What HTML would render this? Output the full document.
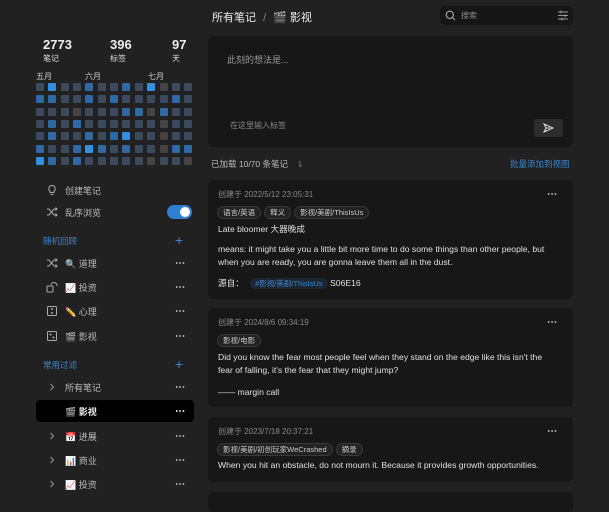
<!DOCTYPE html>
<html><head><meta charset="utf-8"><style>
*{margin:0;padding:0;box-sizing:border-box}
body{width:609px;height:500px;overflow:hidden;background:#212121;font-family:"Liberation Sans","Noto Sans CJK SC",sans-serif;color:#ddd;position:relative}
.a{position:absolute;white-space:nowrap}
.num{font-size:13px;font-weight:bold;color:#eee}
.lab{font-size:8px;color:#ddd}
.cell{position:absolute;width:8px;height:8px;border-radius:1px}
.it{position:absolute;left:36px;width:158px;height:22px;font-size:9px;color:#bbb}
.it .ic{position:absolute;left:10px;top:5px;width:12px;height:12px}
.it .tx{position:absolute;left:29px;top:5px}
.it .dots{position:absolute;right:9px;top:10px;width:10px;height:2px;background:radial-gradient(circle,#aaa 0.9px,transparent 1px) 0 0/3.4px 2px repeat-x}
.sec{position:absolute;left:43px;font-size:8.5px;color:#3a86d0}
.plus{position:absolute;left:175px;font-size:14px;color:#3a86d0;line-height:14px}
.card{position:absolute;left:208px;width:365px;background:#171717;border-radius:5px}
.date{position:absolute;left:10px;top:9px;font-size:8px;color:#888}
.cd{position:absolute;right:16px;top:13px;width:10px;height:2px;background:radial-gradient(circle,#aaa 0.9px,transparent 1px) 0 0/3.4px 2px repeat-x}
.tag{display:inline-block;font-size:7.5px;color:#ccc;border:1px solid #3a3a3a;background:#222;border-radius:7px;padding:0 5px;margin-right:3px;line-height:11px;height:13px}
.tags{position:absolute;left:9px;display:flex;height:13px}
.p{position:absolute;left:10px;font-size:8.6px;color:#e0e0e0;line-height:13px;white-space:nowrap}
.chev{position:absolute;left:13px;top:7px}
</style></head><body>

<div class="a num" style="left:43px;top:37px">2773</div>
<div class="a lab" style="left:43px;top:53px">笔记</div>
<div class="a num" style="left:110px;top:37px">396</div>
<div class="a lab" style="left:110px;top:53px">标签</div>
<div class="a num" style="left:172px;top:37px">97</div>
<div class="a lab" style="left:172px;top:53px">天</div>
<div class="a lab" style="left:36px;top:71px;color:#ccc">五月</div>
<div class="a lab" style="left:85px;top:71px;color:#ccc">六月</div>
<div class="a lab" style="left:148px;top:71px;color:#ccc">七月</div>
<div id="hm"></div>

<div class="it" style="top:179px"><svg class="ic" viewBox="0 0 12 12" fill="none" stroke="#aaa" stroke-width="1"><path d="M6 1.5a3.2 3.2 0 0 0-2 5.7V8.5h4V7.2A3.2 3.2 0 0 0 6 1.5zM4.5 10.5h3"/></svg><span class="tx">创建笔记</span></div>
<div class="it" style="top:201px"><svg class="ic" viewBox="0 0 12 12" fill="none" stroke="#aaa" stroke-width="1"><path d="M1 3h2l5 6h3M1 9h2l5-6h3M9.5 1.5 11 3 9.5 4.5M9.5 7.5 11 9l-1.5 1.5"/></svg><span class="tx">乱序浏览</span></div>
<div class="a" style="left:167px;top:205px;width:25px;height:14px;border-radius:7px;background:#2f7fd2"><div style="position:absolute;right:2px;top:2px;width:10px;height:10px;border-radius:50%;background:#fff"></div></div>

<div class="sec" style="top:235px">随机回顾</div><div class="plus" style="top:233px">+</div>
<div class="it" style="top:252px"><svg class="ic" viewBox="0 0 12 12" fill="none" stroke="#aaa" stroke-width="1"><path d="M1 3h2l5 6h3M1 9h2l5-6h3M9.5 1.5 11 3 9.5 4.5M9.5 7.5 11 9l-1.5 1.5"/></svg><span class="tx">🔍 道理</span><span class="dots"></span></div>
<div class="it" style="top:276px"><svg class="ic" viewBox="0 0 12 12" fill="none" stroke="#aaa" stroke-width="1"><rect x="1" y="5" width="6" height="6" rx="1"/><path d="M5 4a3 3 0 0 1 6 1"/></svg><span class="tx">📈 投资</span><span class="dots"></span></div>
<div class="it" style="top:300px"><svg class="ic" viewBox="0 0 12 12" fill="none" stroke="#aaa" stroke-width="1"><rect x="1.5" y="1.5" width="9" height="9" rx="1"/><circle cx="6" cy="4" r=".5" fill="#aaa"/><circle cx="6" cy="8" r=".5" fill="#aaa"/></svg><span class="tx">✏️ 心理</span><span class="dots"></span></div>
<div class="it" style="top:325px"><svg class="ic" viewBox="0 0 12 12" fill="none" stroke="#aaa" stroke-width="1"><rect x="1.5" y="1.5" width="9" height="9" rx="1"/><circle cx="4.5" cy="4.5" r=".5" fill="#aaa"/><circle cx="7.5" cy="7.5" r=".5" fill="#aaa"/></svg><span class="tx">🎬 影视</span><span class="dots"></span></div>

<div class="sec" style="top:359px">常用过滤</div><div class="plus" style="top:357px">+</div>
<div class="it" style="top:376px"><svg class="chev" width="6" height="8" viewBox="0 0 6 8" fill="none" stroke="#999" stroke-width="1"><path d="M1.5 1 4.5 4 1.5 7"/></svg><span class="tx">所有笔记</span><span class="dots"></span></div>
<div class="it" style="top:400px;background:#000;border-radius:4px;color:#eee;font-weight:bold"><span class="tx">🎬 影视</span><span class="dots" style="background:radial-gradient(circle,#ddd 0.9px,transparent 1px) 0 0/3.4px 2px repeat-x"></span></div>
<div class="it" style="top:425px"><svg class="chev" width="6" height="8" viewBox="0 0 6 8" fill="none" stroke="#999" stroke-width="1"><path d="M1.5 1 4.5 4 1.5 7"/></svg><span class="tx">📅 进展</span><span class="dots"></span></div>
<div class="it" style="top:449px"><svg class="chev" width="6" height="8" viewBox="0 0 6 8" fill="none" stroke="#999" stroke-width="1"><path d="M1.5 1 4.5 4 1.5 7"/></svg><span class="tx">📊 商业</span><span class="dots"></span></div>
<div class="it" style="top:473px"><svg class="chev" width="6" height="8" viewBox="0 0 6 8" fill="none" stroke="#999" stroke-width="1"><path d="M1.5 1 4.5 4 1.5 7"/></svg><span class="tx">📈 投资</span><span class="dots"></span></div>

<div class="a" style="left:212px;top:9px;font-size:11px;color:#eee">所有笔记 <span style="color:#888;margin:0 4px">/</span> 🎬 影视</div>
<div class="a" style="left:440px;top:6px;width:133px;height:19px;background:#161616;border-radius:5px">
<svg style="position:absolute;left:5px;top:4px" width="11" height="11" viewBox="0 0 11 11" fill="none" stroke="#aaa" stroke-width="1.1"><circle cx="4.8" cy="4.8" r="3.6"/><path d="M7.5 7.5 10 10"/></svg>
<span style="position:absolute;left:21px;top:4px;font-size:8px;color:#888">搜索</span>
<svg style="position:absolute;right:5px;top:4px" width="10" height="11" viewBox="0 0 10 11" stroke="#999" stroke-width="1"><path d="M0 2h10M0 5.5h10M0 9h10M3 0.5v3M7 4v3M4 7.5v3"/></svg></div>

<div class="card" style="top:36px;height:111px">
<div class="a" style="left:19px;top:17px;font-size:9px;color:#999">此刻的想法是...</div>
<div class="a" style="left:22px;top:84px;font-size:8px;color:#888">在这里输入标签</div>
<div class="a" style="left:326px;top:83px;width:29px;height:18px;background:#2c2c2c;border-radius:3px"><svg style="position:absolute;left:9px;top:4px" width="11" height="10" viewBox="0 0 11 10" fill="none" stroke="#ddd" stroke-width="1"><path d="M1 1 10 5 1 9 3 5zM3 5h4"/></svg></div>
</div>
<div class="a" style="left:211px;top:158px;font-size:8.5px;color:#bbb">已加载 10/70 条笔记 <span style="color:#888;margin-left:6px">⇂</span></div>
<div class="a" style="left:510px;top:158px;font-size:8.5px;color:#3a86d0">批量添加到视图</div>

<div class="card" style="top:180px;height:119px">
<div class="date">创建于 2022/5/12 23:05:31</div><div class="cd"></div>
<div class="tags" style="top:26px"><span class="tag">语言/英语</span><span class="tag">释义</span><span class="tag">影视/美剧/ThisIsUs</span></div>
<div class="p" style="top:43px">Late bloomer 大器晚成</div>
<div class="p" style="top:63px">means: it might take you a little bit more time to do some things than other people, but<br>when you are ready, you are gonna leave them all in the dust.</div>
<div class="p" style="top:97px">源自： <span style="font-size:7.5px;color:#3a86d0;background:#1c2633;border-radius:6px;padding:1px 5px;margin-left:4px">#影视/美剧/ThisIsUs</span> S06E16</div>
</div>

<div class="card" style="top:308px;height:99px">
<div class="date">创建于 2024/8/6 09:34:19</div><div class="cd"></div>
<div class="tags" style="top:26px"><span class="tag">影视/电影</span></div>
<div class="p" style="top:43px">Did you know the fear most people feel when they stand on the edge like this isn't the<br>fear of falling, it's the fear that they might jump?</div>
<div class="p" style="top:78px">—— margin call</div>
</div>

<div class="card" style="top:417px;height:65px">
<div class="date">创建于 2023/7/18 20:37:21</div><div class="cd"></div>
<div class="tags" style="top:26px"><span class="tag">影视/美剧/初创玩家WeCrashed</span><span class="tag">摘录</span></div>
<div class="p" style="top:42px">When you hit an obstacle, do not mourn it. Because it provides growth opportunities.</div>
</div>
<div class="card" style="top:492px;height:20px"></div>

<script>
var g=[
"0200100102g00",
"1100101000010",
"000g00011g100",
"0101000000g00",
"0100101200g00",
"1001210100g11",
"210100000g00g"];
var c={"0":"#3b4b5d","1":"#2e68a5","2":"#3290e0","g":"#444"};
var h="";
for(var r=0;r<7;r++)for(var k=0;k<13;k++){var v=g[r][k]||"0";h+='<div class="cell" style="left:'+(36+k*12.35)+'px;top:'+(83+r*12.35)+'px;background:'+c[v]+'"></div>';}
document.getElementById("hm").innerHTML=h;
</script>
</body></html>
